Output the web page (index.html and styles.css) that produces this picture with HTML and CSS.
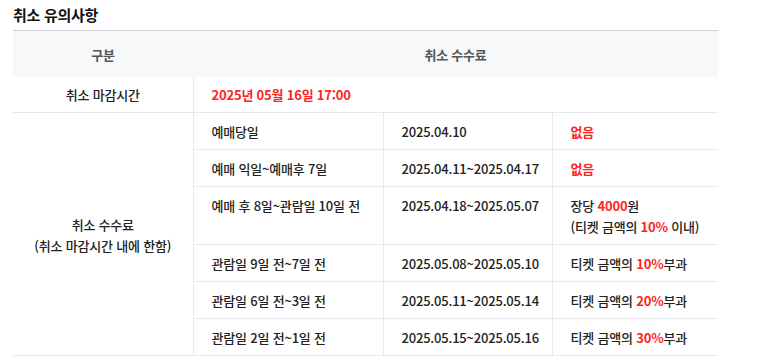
FILE: index.html
```html
<!DOCTYPE html>
<html lang="ko">
<head>
<meta charset="utf-8">
<link rel="stylesheet" href="styles.css">
</head>
<body>
<section class="notice">
  <h2 class="title">취소 유의사항</h2>
  <table class="fee-table">
    <colgroup>
      <col class="c1"><col class="c2"><col class="c3"><col class="c4">
    </colgroup>
    <thead>
      <tr><th>구분</th><th colspan="3">취소 수수료</th></tr>
    </thead>
    <tbody>
      <tr>
        <td class="label">취소 마감시간</td>
        <td colspan="3" class="deadline">2025년 05월 16일 17:00</td>
      </tr>
      <tr>
        <td class="label" rowspan="6">취소 수수료<br>(취소 마감시간 내에 한함)</td>
        <td>예매당일</td>
        <td>2025.04.10</td>
        <td><span class="red">없음</span></td>
      </tr>
      <tr>
        <td>예매 익일~예매후 7일</td>
        <td>2025.04.11~2025.04.17</td>
        <td><span class="red">없음</span></td>
      </tr>
      <tr>
        <td>예매 후 8일~관람일 10일 전</td>
        <td>2025.04.18~2025.05.07</td>
        <td>장당 <span class="red">4000</span>원<br>(티켓 금액의 <span class="red">10%</span> 이내)</td>
      </tr>
      <tr>
        <td>관람일 9일 전~7일 전</td>
        <td>2025.05.08~2025.05.10</td>
        <td>티켓 금액의 <span class="red">10%</span>부과</td>
      </tr>
      <tr>
        <td>관람일 6일 전~3일 전</td>
        <td>2025.05.11~2025.05.14</td>
        <td>티켓 금액의 <span class="red">20%</span>부과</td>
      </tr>
      <tr>
        <td>관람일 2일 전~1일 전</td>
        <td>2025.05.15~2025.05.16</td>
        <td>티켓 금액의 <span class="red">30%</span>부과</td>
      </tr>
    </tbody>
  </table>
</section>
</body>
</html>
```

FILE: styles.css
```css
html, body {
  margin: 0;
  padding: 0;
  background: #fff;
}
body {
  font-family: "Noto Sans CJK KR", "Noto Sans", sans-serif;
  color: #222;
}
.notice {
  padding: 4px 0 0 13px;
  width: 705px;
}
.title {
  margin: 0 0 5px 0;
  font-size: 15px;
  line-height: 21px;
  font-weight: 700;
  color: #111;
  letter-spacing: -0.3px;
}
.fee-table {
  width: 705px;
  border-collapse: collapse;
  table-layout: fixed;
  font-size: 13px;
  line-height: 21px;
  letter-spacing: -0.2px;
  font-weight: 500;
}
.c1 { width: 180px; }
.c2 { width: 190px; }
.c3 { width: 169px; }
.c4 { width: 166px; }
.fee-table thead th {
  background: #f7f8fa;
  border-top: 1px solid #cfd0da;
  height: 46px;
  padding: 0;
  font-weight: 700;
  color: #555;
  text-align: center;
}
.fee-table td {
  border: 1px solid #e8e9ee;
  padding: 8px 18px 7px;
  vertical-align: top;
  text-align: left;
}
.fee-table tbody tr:first-child td {
  border-top: none;
  padding-top: 7px;
}
.fee-table td:first-child { border-left: none; }
.fee-table td:last-child { border-right: none; }
.fee-table td.label {
  text-align: center;
  vertical-align: middle;
  padding-left: 4px;
  padding-right: 4px;
}
.fee-table td.deadline {
  font-weight: 700;
  color: #ff2323;
  border-right: none;
}
.red {
  color: #ff2323;
  font-weight: 700;
}
```
